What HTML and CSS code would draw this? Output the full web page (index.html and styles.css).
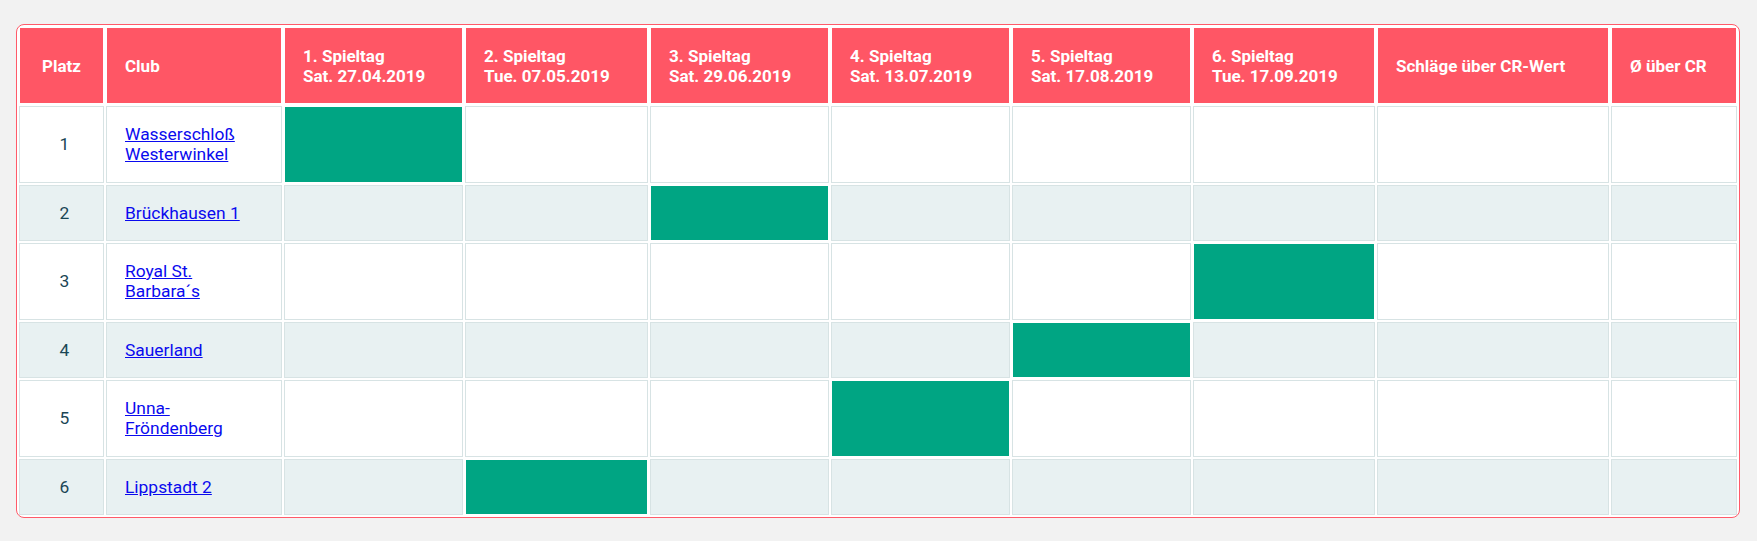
FILE: index.html
```html
<!DOCTYPE html>
<html lang="de">
<head>
<meta charset="utf-8">
<title>Tabelle</title>
<link rel="stylesheet" href="styles.css">
</head>
<body>
<div class="card">
  <table class="standings">
    <colgroup>
      <col class="c-platz"><col class="c-club"><col class="c-d1"><col class="c-d2"><col class="c-d3"><col class="c-d4"><col class="c-d5"><col class="c-d6"><col class="c-cr"><col class="c-avg">
    </colgroup>
    <thead>
      <tr>
        <th class="center">Platz</th>
        <th>Club</th>
        <th>1. Spieltag<br>Sat. 27.04.2019</th>
        <th>2. Spieltag<br>Tue. 07.05.2019</th>
        <th>3. Spieltag<br>Sat. 29.06.2019</th>
        <th>4. Spieltag<br>Sat. 13.07.2019</th>
        <th>5. Spieltag<br>Sat. 17.08.2019</th>
        <th>6. Spieltag<br>Tue. 17.09.2019</th>
        <th>Schläge über CR-Wert</th>
        <th>Ø über CR</th>
      </tr>
    </thead>
    <tbody>
      <tr class="tall">
        <td class="center">1</td>
        <td><a href="#">Wasserschloß Westerwinkel</a></td>
        <td class="hit"></td><td></td><td></td><td></td><td></td><td></td><td></td><td></td>
      </tr>
      <tr class="alt">
        <td class="center">2</td>
        <td><a href="#">Brückhausen 1</a></td>
        <td></td><td></td><td class="hit"></td><td></td><td></td><td></td><td></td><td></td>
      </tr>
      <tr class="tall">
        <td class="center">3</td>
        <td><a href="#">Royal St. <span class="nowrap">Barbara´s</span></a></td>
        <td></td><td></td><td></td><td></td><td></td><td class="hit"></td><td></td><td></td>
      </tr>
      <tr class="alt">
        <td class="center">4</td>
        <td><a href="#">Sauerland</a></td>
        <td></td><td></td><td></td><td></td><td class="hit"></td><td></td><td></td><td></td>
      </tr>
      <tr class="tall">
        <td class="center">5</td>
        <td><a href="#">Unna-Fröndenberg</a></td>
        <td></td><td></td><td></td><td class="hit"></td><td></td><td></td><td></td><td></td>
      </tr>
      <tr class="alt">
        <td class="center">6</td>
        <td><a href="#">Lippstadt 2</a></td>
        <td></td><td class="hit"></td><td></td><td></td><td></td><td></td><td></td><td></td>
      </tr>
    </tbody>
  </table>
</div>
</body>
</html>
```

FILE: styles.css
```css
html, body {
  margin: 0;
  padding: 0;
  background: #f2f2f2;
}
body {
  padding: 24px 17px 22px 16px;
  font-family: Roboto, "Noto Sans", "Liberation Sans", sans-serif;
}
.card {
  background: #ffffff;
  border: 1px solid #ff5a69;
  border-radius: 8px;
  overflow: hidden;
}
.standings {
  width: 100%;
  table-layout: fixed;
  border-collapse: separate;
  border-spacing: 2px;
}
.c-platz { width: 85px; }
.c-club { width: 176px; }
.c-d1 { width: 179px; }
.c-d2 { width: 183px; }
.c-d3 { width: 179px; }
.c-d4 { width: 179px; }
.c-d5 { width: 179px; }
.c-d6 { width: 182px; }
.c-cr { width: 232px; }
.c-avg { width: 126px; }

.standings th {
  background: #ff5665;
  color: #ffffff;
  border: 1px solid #ffffff;
  font-weight: 700;
  font-size: 17px;
  line-height: 20px;
  text-align: left;
  padding: 18px 18px 17px;
  vertical-align: middle;
}
.standings td {
  background: #ffffff;
  border: 1px solid #d7e3e4;
  color: #1a4655;
  font-size: 17.4px;
  line-height: 20px;
  padding: 17px 18px 18px;
  vertical-align: middle;
}
.standings tr.alt td {
  background: #e8f1f2;
  padding-bottom: 17px;
}
.standings tr.alt td.hit,
.standings td.hit {
  background: #00a583;
  border-color: #ffffff;
}
.standings .center {
  text-align: center;
}
.standings td.center {
  padding-left: 21px;
  padding-right: 15px;
}
.standings tr.tall td { height: 40px; }
.standings tr.alt td { height: 20px; }
.standings a {
  color: #0a0aee;
}
.nowrap {
  white-space: nowrap;
}
```
